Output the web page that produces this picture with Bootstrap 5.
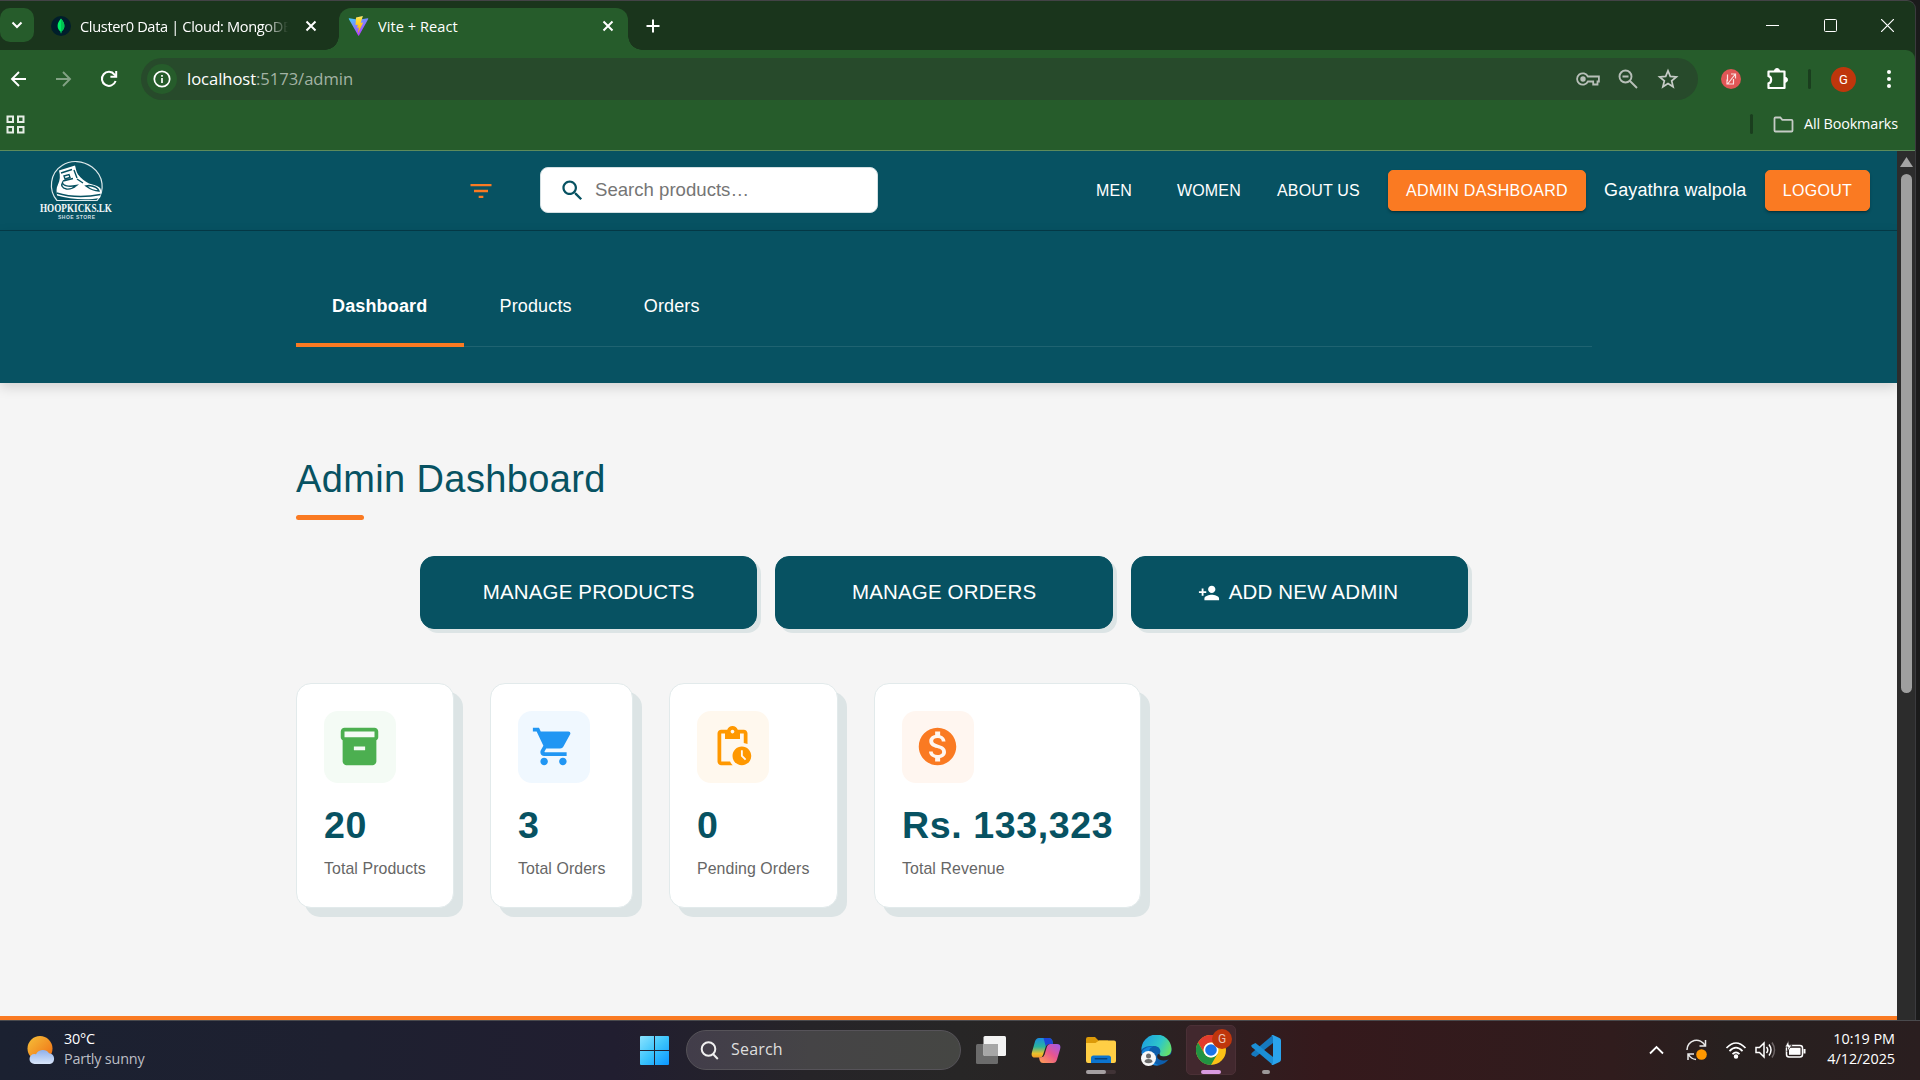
<!DOCTYPE html>
<html lang="en">
<head>
<meta charset="utf-8">
<title>Vite + React</title>
<meta name="viewport" content="width=device-width, initial-scale=1">
<link href="https://cdn.jsdelivr.net/npm/bootstrap@5.3.0/dist/css/bootstrap.min.css" rel="stylesheet">
<style>
:root{--teal:#075262;--brand:#fa7a22;--ui:"Open Sans","Noto Sans",sans-serif;--web:"Liberation Sans",Arial,sans-serif}
body{width:1920px;height:1080px;overflow:hidden;background:#1b1b1b;font-family:var(--ui);line-height:1.2}
svg{display:block;flex:none}
.frame{width:1916px;height:1020px;background:#1a351c;border-top:1px solid #434346;border-right:1px solid #3b3b3e;border-radius:0 9px 0 0;overflow:hidden}
.tabstrip{height:49px;color:#fff;font-size:14.6px;letter-spacing:-.35px}
.tabmenu{width:34px;height:34px;margin-top:7px;border-radius:10px;background:#265c2b}
.tab-idle{width:288px;height:49px;padding:0 4px 0 17px}
.tab-name{white-space:nowrap;overflow:hidden;line-height:24px}
.tab-idle .tab-name{width:210px;margin-left:9px;-webkit-mask-image:linear-gradient(90deg,#000 185px,transparent 208px);mask-image:linear-gradient(90deg,#000 185px,transparent 208px)}
.tab-live{width:289px;height:42px;margin:7px 0 0 17px;background:#265c2b;border-radius:12px 12px 0 0;position:relative;padding:0 12px 7px 9px}
.tab-live::before,.tab-live::after{content:"";position:absolute;bottom:0;width:14px;height:14px}
.tab-live::before{left:-14px;background:radial-gradient(circle at 0 0,transparent 13.5px,#265c2b 14px)}
.tab-live::after{right:-14px;background:radial-gradient(circle at 100% 0,transparent 13.5px,#265c2b 14px)}
.tab-live .tab-name{margin-left:9px;width:223px;letter-spacing:.05px}
.wincontrols{margin-right:21px;gap:44.5px}
.toolbar{height:50px;background:#265c2b;border-radius:0 9px 0 0;padding-top:8px}
.navicons{width:141px;height:42px;padding-left:9px;gap:25px;padding-top:0}
.omnibox{width:1557px;height:42px;border-radius:21px;background:#274a2b;padding-left:6px;padding-right:19px}
.siteinfo{width:30px;height:30px;border-radius:50%;background:#265c2b}
.url{font-size:16.6px;margin-left:10px;letter-spacing:-.05px;color:#a3b3a4}
.url span{color:#fff}
.avatar{width:25px;height:25px;border-radius:50%;background:#bf360c;color:#fff;font:13px Roboto,sans-serif}
.tick{width:3px;height:20px;border-radius:2px;background:#1a3e1e}
.bookmarks{height:51px;background:#265c2b;border-bottom:1px solid #5d8b5b;color:#fff;font-size:14.4px;letter-spacing:-.15px;padding:0 17px 2px 6px}
.viewport{height:869px}
.site{width:1897px;background:#f5f5f5;font-family:var(--web)}
.scroller{width:18px;background:#2c2c2c;padding-top:6px}
.thumb{width:11px;height:519px;border-radius:6px;background:#9f9f9f;margin-top:7px}
.sitebar{height:80px;background:var(--teal);border-bottom:1px solid #053b48;color:#fff;font-size:16px;padding:0 27px 0 40px}
.filter{margin-left:351px}
.searchbox{width:338px;height:46px;margin-left:45px;margin-bottom:1px;border-radius:8px;border:1px solid #d3dfe2;background:#fff;color:#757575;font-size:18.6px;padding-left:18px}
.sitelink{color:#fff;text-decoration:none;letter-spacing:.15px;white-space:nowrap}
.btn-brand{--bs-btn-color:#fff;--bs-btn-bg:var(--brand);--bs-btn-border-color:var(--brand);height:41px;border-radius:5px;font-size:16px;padding:0;box-shadow:0 3px 1px -2px rgba(0,0,0,.2),0 2px 3px rgba(0,0,0,.22);line-height:39px;letter-spacing:.3px}
.username{width:161px;margin-left:18px;font-size:18px;letter-spacing:.15px}
.subnav{height:152px;background:var(--teal);box-shadow:0 4px 12px rgba(0,0,0,.15);padding:36px 0 0 296px}
.tabsrow{width:1296px;height:80px;border-bottom:1px solid #1f6371}
.tabsrow .nav-link{font-size:18px;color:#fff;padding:27px 36px 0;height:80px;letter-spacing:.15px;line-height:24px;border-radius:0}
.tabsrow .nav-link.active{width:167.500px;font-weight:700;border-bottom:4px solid var(--brand)}
.board{padding:73px 0 0 296px;height:633px}
.board h1{font-size:38px;line-height:46px;letter-spacing:.38px;color:var(--teal);font-weight:400}
.rule{width:68px;height:5px;border-radius:3px;background:var(--brand)}
.actions{margin:36px 0 0 124px;gap:18px}
.btn-action{--bs-btn-color:#fff;--bs-btn-bg:var(--teal);--bs-btn-border-color:var(--teal);width:337.4px;height:73px;border-radius:14px;box-shadow:4px 4px 0 #dce4e5;font-size:20.5px;letter-spacing:.16px;padding:0}
.stats{gap:36px;margin-top:54px}
.stat{height:225px;border:1px solid #e2eaeb;border-radius:15px;background:#fff;box-shadow:9px 9px 0 #dce4e5;padding:27px;white-space:nowrap}
.tile{width:72px;height:72px;border-radius:14px;padding:0 1px 2px 0}
.figure-no{font-size:37.6px;line-height:44px;font-weight:700;color:var(--teal);margin-top:20px;letter-spacing:.6px}
.caption-txt{font-size:15.9px;line-height:20px;color:#666;margin-top:12px;letter-spacing:.08px}
.footline{height:4px;background:var(--brand)}
.taskbar{height:60px;border-top:1px solid #4a4a4d;background:linear-gradient(90deg,#1b2131 0,#1e2030 18%,#211e30 32%,#262428 42%,#272626 50%,#2b2223 60%,#35191c 69%,#301c1d 84%,#27201f 90%,#2a1e1f 100%);color:#fff;font-size:14.4px;letter-spacing:-.2px;padding-bottom:1px}
.weather{width:640px;padding-left:26px;gap:8px;line-height:20px}
.weather-text{margin-top:-2px}
.finder{width:275px;height:40px;border-radius:20px;margin-left:17px;background:linear-gradient(90deg,#423d4a,#454446 45%,#454643);border:1px solid #565359;color:#dedede;font-size:16px;padding-left:13px;gap:12px}
.app{width:50px;height:50px;border-radius:5px;margin-right:5px;position:relative}
.app-on{background:#42282e;border:1px solid #4b3036}
.run{position:absolute;bottom:1px;height:4px;border-radius:2px}
.appbadge{position:absolute;left:25px;top:3px;width:20px;height:20px;border-radius:50%;background:#bf360c;color:#eac3b5;font:12px/20px Roboto,sans-serif;text-align:center}
.tray{margin-left:auto;padding-right:25px}
.clock{width:81px;text-align:right;line-height:20px;margin:-2px 0 0 8px;letter-spacing:-.05px}
</style>
<script src="https://cdn.jsdelivr.net/npm/bootstrap@5.3.0/dist/js/bootstrap.bundle.min.js"></script>
</head>
<body>
<div class="frame">
  <div class="tabstrip d-flex">
    <div class="tabmenu d-flex align-items-center justify-content-center"><svg width="12" height="10" viewBox="0 0 12 10"><path d="M1.500 2.500 6 7l4.500-4.500" fill="none" stroke="#fff" stroke-width="2"/></svg></div>
    <div class="tab-idle d-flex align-items-center">
      <svg width="20" height="20" viewBox="0 0 20 20"><circle cx="10" cy="10" r="10" fill="#001e2b"/><path d="M10 2.500c2.300 2.600 3.400 5 3.400 7.400 0 2.600-1.400 4.400-3 5.600l-.2 1.800h-.5l-.2-1.800c-1.600-1.200-2.900-3-2.900-5.600C6.600 7.500 7.700 5.100 10 2.500z" fill="#00ed64"/><path d="M10 3v14.300h.2l.2-1.800c1.600-1.200 3-3 3-5.600C13.400 7.500 12.300 5 10 3z" fill="#00c553"/></svg>
      <div class="tab-name">Cluster0 Data | Cloud: MongoDB</div>
      <svg class="ms-auto" width="14" height="14" viewBox="0 0 14 14" stroke="#fff" stroke-width="2"><path d="M2.500 2.500l9 9m0-9-9 9"/></svg>
    </div>
    <div class="tab-live d-flex align-items-center">
      <svg width="21" height="20" viewBox="0 0 32 32"><defs><linearGradient id="vb" x1="0" y1="0" x2=".6" y2="1"><stop stop-color="#41d1ff"/><stop offset="1" stop-color="#bd34fe"/></linearGradient><linearGradient id="vy" x1="0" y1="0" x2="0" y2="1"><stop stop-color="#ffea83"/><stop offset=".2" stop-color="#ffdd35"/><stop offset="1" stop-color="#ffa800"/></linearGradient></defs><path d="M31.600 4.700 16.900 31c-.3.600-1.100.6-1.400 0L.5 4.700c-.4-.6.200-1.300.9-1.200L16.100 6l14.500-2.500c.7-.1 1.300.6 1 1.200z" fill="url(#vb)"/><path d="M23 0 12 2.200l-.7 11.900c0 .3.300.5.5.4l3.100-.7-1.100 5.400 2.900-.7-1.900 9.700 8.300-17c.1-.3-.1-.6-.4-.6l-3.200.6L23 0z" fill="url(#vy)"/></svg>
      <div class="tab-name">Vite + React</div>
      <svg width="14" height="14" viewBox="0 0 14 14" stroke="#fff" stroke-width="2"><path d="M2.500 2.500l9 9m0-9-9 9"/></svg>
    </div>
    <svg class="align-self-center ms-3" width="18" height="18" viewBox="0 0 18 18" stroke="#fff" stroke-width="2"><path d="M9 2.500v13M2.500 9h13"/></svg>
    <div class="wincontrols d-flex align-items-center ms-auto">
      <svg width="13" height="13"><path d="M0 6.500h13" stroke="#fff"/></svg>
      <svg width="13" height="13"><rect x=".5" y=".5" width="12" height="12" rx="1" fill="none" stroke="#fff"/></svg>
      <svg width="13" height="13"><path d="M0 0l13 13m0-13L0 13" stroke="#fff" stroke-width="1.200"/></svg>
    </div>
  </div>
  <div class="toolbar d-flex">
    <div class="navicons d-flex align-items-center">
      <svg width="20" height="20" viewBox="0 0 20 20" fill="none" stroke="#fff" stroke-width="1.900"><path d="M17 10H3m7-7-7 7 7 7"/></svg>
      <svg width="20" height="20" viewBox="0 0 20 20" fill="none" stroke="#83a285" stroke-width="1.900"><path d="M2 10h14M9 3l7 7-7 7"/></svg>
      <svg width="20" height="20" viewBox="0 0 20 20" fill="none" stroke="#fff" stroke-width="2"><path d="M16.600 12A7 7 0 1 1 15.500 5.600L17 7"/><path d="M17.200 2v5.800h-5.800"/></svg>
    </div>
    <div class="omnibox d-flex align-items-center">
      <div class="siteinfo d-flex align-items-center justify-content-center"><svg width="18" height="18" viewBox="0 0 18 18" fill="none" stroke="#fff" stroke-width="1.700"><circle cx="9" cy="9" r="7.700"/><path d="M9 8v5M9 5v1.800"/></svg></div>
      <div class="url"><span>localhost</span>:5173/admin</div>
      <svg class="ms-auto" width="24" height="20" viewBox="0 0 24 20" fill="none" stroke="#b7bfb8" stroke-width="1.800"><path d="M11.900 7.500a5.700 5.700 0 1 0 0 5h5.300v3h4.300v-3h1.400v-5z"/><circle cx="7" cy="10" r="1.800" fill="#b7bfb8"/></svg>
      <svg class="ms-3" width="24" height="24" viewBox="0 0 24 24" fill="none" stroke="#b7bfb8" stroke-width="1.900"><circle cx="9.500" cy="9.500" r="6"/><path d="M14 14l7 7M6.500 9.500h6"/></svg>
      <svg style="margin-left:17px" width="22" height="22" viewBox="0 0 24 24" fill="none" stroke="#c5cbc6" stroke-width="1.900"><path d="M12 3l2.500 6.200 6.600.5-5.100 4.300 1.600 6.500-5.600-3.500-5.600 3.500L8 14 2.900 9.700l6.600-.5z"/></svg>
    </div>
    <div class="d-flex align-items-center" style="height:42px">
      <svg style="margin-left:23px" width="20" height="20" viewBox="0 0 20 20"><circle cx="10" cy="10" r="10" fill="#e05656"/><path d="M6.500 5.500V12M8.500 15H13M7 14.500l7-9M10 5h4.500v4.500M6 10.500v4.500h3.500M12.500 10v4.500" fill="none" stroke="#fbe0e0" stroke-width="1.200"/></svg>
      <svg style="margin-left:24px" width="24" height="24" viewBox="0 0 24 24"><path d="M3.500 4.500H19.500v16.500H3.500v-4.700c3.500-.5 3.500-6.600 0-7.100z" fill="none" stroke="#fff" stroke-width="2.200" stroke-linejoin="round"/><path d="M9.500 4a2.500 2.500 0 0 1 5 0zM20 10.300a2.500 2.500 0 0 1 0 5z" fill="#fff" stroke="#fff"/></svg>
      <div class="tick" style="margin-left:19px"></div>
      <div class="avatar d-flex align-items-center justify-content-center" style="margin-left:20px">G</div>
      <svg style="margin-left:28px" width="10" height="20" fill="#fff"><circle cx="5" cy="3" r="2"/><circle cx="5" cy="10" r="2"/><circle cx="5" cy="17" r="2"/></svg>
    </div>
  </div>
  <div class="bookmarks d-flex align-items-center">
    <svg width="19" height="19" fill="none" stroke="#e6ede6" stroke-width="2"><path d="M1.500 1.500h5.500v5.500h-5.500zM12 1.500h5.500v5.500H12zM1.500 12h5.500v5.500h-5.500zM12 12h5.500v5.500H12z"/></svg>
    <div class="tick ms-auto"></div>
    <svg style="margin:0 10px 0 20px" width="21" height="17" fill="none" stroke="#c5cbc6" stroke-width="1.800"><path d="M1.500 2.500q0-1 1-1h4.800l2 2.400H18.500q1 0 1 1v9.600q0 1-1 1h-16q-1 0-1-1z"/></svg>
    <div>All Bookmarks</div>
  </div>
  <div class="viewport d-flex">
    <div class="site">
      <nav class="sitebar d-flex align-items-center">
        <svg width="76" height="64" viewBox="0 0 76 64" overflow="visible">
          <path d="M17 41.500C8 31 10 14 22 6.500c9-6 21-5 30 1.500 12 9 13 24 5 33.500z" fill="none" stroke="#dce8ea" stroke-width="1.200"/>
          <path d="M19 11.500 35 6.500c1 3 1 6 3 9 3 4 7 7 11 9 5 1.500 9 2 11.500 5 1 2 .5 6-.5 9.500-14 2.500-31 1-43-2.500-.5-4-1-7 1-11 2-4 2.500-9 1-14z" fill="#fff"/>
          <path d="M21 14l11-3.500M24 17l5-1.500 1 3-5 1.500zM23 22l10-2.500M34 11l3 8M16.500 34c13 4 29 4.500 44 1.500M26.500 30c-5-1-5.500-4-4-6.500.5 3.500 6 4.500 14 3-3 2.500-6.500 4-10 3.500zM46 27c4 3 8 5 13 5-1-3-6-5-10-5.500zM37 20l6 4" fill="none" stroke="#075262" stroke-width="1.400"/>
          <text x="0" y="52.500" textLength="72" lengthAdjust="spacingAndGlyphs" font-family="Liberation Serif,serif" font-size="13" font-weight="700" fill="#f2f7f8">HOOPKICKS.LK</text>
          <text x="18" y="60" textLength="37" font-family="Liberation Sans,sans-serif" font-size="5" font-weight="700" fill="#cfdee1">SHOE STORE</text>
        </svg>
        <svg class="filter" width="28" height="28" viewBox="0 0 24 24" fill="#fa7a22"><path d="M10 18h4v-2h-4v2zM3 6v2h18V6H3zm3 7h12v-2H6v2z"/></svg>
        <div class="searchbox d-flex align-items-center"><svg width="27" height="27" viewBox="0 0 24 24" fill="#075262"><path d="M15.500 14h-.79l-.28-.27C15.410 12.590 16 11.110 16 9.500 16 5.910 13.090 3 9.500 3S3 5.910 3 9.500 5.910 16 9.500 16c1.610 0 3.090-.59 4.230-1.570l.27.28v.79l5 4.990L20.490 19l-4.990-5zm-6 0C7.010 14 5 11.990 5 9.500S7.010 5 9.500 5 14 7.010 14 9.500 11.990 14 9.500 14z"/></svg><span style="margin-left:9px">Search products…</span></div>
        <div class="d-flex align-items-center ms-auto">
          <a class="sitelink" style="width:81px">MEN</a><a class="sitelink" style="width:100px">WOMEN</a><a class="sitelink" style="width:111px">ABOUT US</a>
          <a class="btn btn-brand" style="width:198px">ADMIN DASHBOARD</a>
          <span class="username text-nowrap">Gayathra walpola</span>
          <a class="btn btn-brand" style="width:105px">LOGOUT</a>
        </div>
      </nav>
      <div class="subnav"><div class="tabsrow nav flex-nowrap"><a class="nav-link active">Dashboard</a><a class="nav-link">Products</a><a class="nav-link">Orders</a></div></div>
      <main class="board">
        <h1 class="mb-0">Admin Dashboard</h1>
        <div class="rule" style="margin-top:13px"></div>
        <div class="actions d-flex">
          <a class="btn btn-action d-flex align-items-center justify-content-center">MANAGE PRODUCTS</a>
          <a class="btn btn-action d-flex align-items-center justify-content-center">MANAGE ORDERS</a>
          <a class="btn btn-action d-flex align-items-center justify-content-center"><svg style="margin:0 9px 0 -3px" width="22" height="22" viewBox="0 0 24 24" fill="#fff"><path d="M15 12c2.210 0 4-1.790 4-4s-1.790-4-4-4-4 1.790-4 4 1.790 4 4 4zm-9-2V7H4v3H1v2h3v3h2v-3h3v-2H6zm9 4c-2.670 0-8 1.340-8 4v2h16v-2c0-2.660-5.330-4-8-4z"/></svg>ADD NEW ADMIN</a>
        </div>
        <div class="stats d-flex">
          <div class="stat" style="width:158px">
            <div class="tile d-flex align-items-center justify-content-center" style="background:#f4fbf5"><svg width="45" height="45" viewBox="0 0 24 24" fill="#4caf50"><path d="M20 2H4c-1 0-2 .9-2 2v3.010c0 .72.430 1.340 1 1.690V20c0 1.100 1.100 2 2 2h14c.9 0 2-.9 2-2V8.700c.57-.35 1-.97 1-1.690V4c0-1.100-1-2-2-2zm-5 12H9v-2h6v2zm5-7H4V4h16v3z"/></svg></div>
            <div class="figure-no">20</div><div class="caption-txt">Total Products</div>
          </div>
          <div class="stat" style="width:143px">
            <div class="tile d-flex align-items-center justify-content-center" style="background:#f0f8ff"><svg width="45" height="45" viewBox="0 0 24 24" fill="#2196f3"><path d="M7 18c-1.100 0-1.990.9-1.990 2S5.900 22 7 22s2-.9 2-2-.9-2-2-2zM1 2v2h2l3.600 7.590-1.350 2.450c-.16.280-.25.610-.25.960 0 1.100.9 2 2 2h12v-2H7.420c-.14 0-.25-.11-.25-.25l.03-.12.900-1.630h7.450c.75 0 1.410-.41 1.750-1.030l3.580-6.490c.08-.14.120-.31.120-.48 0-.55-.45-1-1-1H5.210l-.94-2H1zm16 16c-1.100 0-1.990.9-1.990 2s.89 2 1.990 2 2-.9 2-2-.9-2-2-2z"/></svg></div>
            <div class="figure-no">3</div><div class="caption-txt">Total Orders</div>
          </div>
          <div class="stat" style="width:169px">
            <div class="tile d-flex align-items-center justify-content-center" style="background:#fff8ee"><svg width="45" height="45" viewBox="0 0 24 24" fill="#ff9800"><path d="M17 12c-2.760 0-5 2.240-5 5s2.240 5 5 5 5-2.240 5-5-2.240-5-5-5zm1.650 7.350L16.500 17.200V14h1v2.790l1.850 1.850-.7.710zM18 3h-3.180C14.400 1.840 13.300 1 12 1s-2.400.84-2.820 2H6c-1.100 0-2 .9-2 2v15c0 1.100.9 2 2 2h6.110c-.59-.57-1.070-1.250-1.420-2H6V5h2v3h8V5h2v5.080c.71.100 1.380.31 2 .60V5c0-1.100-.9-2-2-2zm-6 2c-.55 0-1-.45-1-1s.45-1 1-1 1 .45 1 1-.45 1-1 1z"/></svg></div>
            <div class="figure-no">0</div><div class="caption-txt">Pending Orders</div>
          </div>
          <div class="stat" style="width:267px">
            <div class="tile d-flex align-items-center justify-content-center" style="background:#fff6f0"><svg width="45" height="45" viewBox="0 0 24 24" fill="#fa7a22"><path d="M12 2C6.480 2 2 6.480 2 12s4.480 10 10 10 10-4.480 10-10S17.520 2 12 2zm1.410 16.090V20h-2.670v-1.930c-1.710-.36-3.160-1.460-3.270-3.400h1.960c.1 1.050.820 1.870 2.650 1.870 1.960 0 2.400-.98 2.400-1.590 0-.83-.44-1.610-2.670-2.140-2.480-.6-4.180-1.620-4.180-3.670 0-1.720 1.390-2.840 3.110-3.210V4h2.670v1.950c1.860.45 2.790 1.860 2.850 3.390H14.300c-.05-1.110-.64-1.870-2.220-1.870-1.500 0-2.400.68-2.400 1.640 0 .84.650 1.390 2.670 1.910s4.180 1.390 4.180 3.910c-.01 1.830-1.380 2.830-3.120 3.160z"/></svg></div>
            <div class="figure-no">Rs. 133,323</div><div class="caption-txt">Total Revenue</div>
          </div>
        </div>
      </main>
      <div class="footline"></div>
    </div>
    <div class="scroller d-flex flex-column align-items-center"><svg width="13" height="10"><path d="M6.500 0 13 10H0z" fill="#a3a3a3"/></svg><div class="thumb"></div></div>
  </div>
</div>
<footer class="taskbar d-flex align-items-center">
  <div class="weather d-flex align-items-center">
    <svg width="30" height="30" viewBox="0 0 30 30"><defs><linearGradient id="sun" x1="0" y1="0" x2="1" y2="1"><stop stop-color="#f5c13a"/><stop offset="1" stop-color="#f06a12"/></linearGradient><linearGradient id="cl" x1="0" y1="0" x2="0" y2="1"><stop stop-color="#8fb0ea"/><stop offset="1" stop-color="#d9e6fa"/></linearGradient></defs><circle cx="14" cy="13.500" r="12.500" fill="url(#sun)"/><path d="M8.500 29a5 5 0 0 1 0-10q1-.1 1.500.2a7.500 7.500 0 0 1 13-1 5.500 5.500 0 0 1 1 10.800z" fill="url(#cl)"/></svg>
    <div class="weather-text"><div>30°C</div><div style="color:#bcbec5">Partly sunny</div></div>
  </div>
  <svg width="29" height="29" viewBox="0 0 29 29"><defs><linearGradient id="wn" x1="0" y1="0" x2="1" y2="1"><stop stop-color="#8be3ff"/><stop offset=".5" stop-color="#3cc4fb"/><stop offset="1" stop-color="#0a95ff"/></linearGradient></defs><path d="M1 0h13v14H0V1q0-1 1-1zM15 0h13q1 0 1 1v13H15zM0 15h14v14H1q-1 0-1-1zM15 15h14v13q0 1-1 1H15z" fill="url(#wn)"/></svg>
  <div class="finder d-flex align-items-center"><svg width="19" height="19" fill="none" stroke="#f0f0f0" stroke-width="2"><circle cx="8.500" cy="8" r="6.800"/><path d="M13 13l4.800 5"/></svg><span style="letter-spacing:.2px">Search</span></div>
  <div class="app d-flex align-items-center justify-content-center" style="margin-left:5px"><svg width="30" height="28" viewBox="0 0 30 28"><rect y="8" width="22" height="20" rx="1.500" fill="#6b6b6b"/><rect x="7.500" width="22.500" height="20" rx="1.500" fill="#f3f3f3"/><path d="M7.500 8H22v12H9q-1.500 0-1.500-1.500z" fill="#a6a6a6"/></svg></div>
  <div class="app d-flex align-items-center justify-content-center"><svg width="30" height="27" viewBox="0 0 30 27"><defs><linearGradient id="c1" x1="0" y1="0" x2="0" y2="1"><stop stop-color="#1a8be0"/><stop offset=".45" stop-color="#2bb59c"/><stop offset=".8" stop-color="#ecc12c"/><stop offset="1" stop-color="#f39a26"/></linearGradient><linearGradient id="c2" x1="1" y1="0" x2=".1" y2="1"><stop stop-color="#9b5af0"/><stop offset=".5" stop-color="#e8558f"/><stop offset="1" stop-color="#ff9c55"/></linearGradient></defs><path d="M8 1h10q2.500 0 3.300 2.500L22 7h-4.500q-2 0-2.700 2.500L12 18q-.8 2.500-3 2.500H4Q-.5 20.500 1 15L4 4.500Q5 1 8 1z" fill="url(#c1)"/><path d="M12.500 1H18q2.500 0 3.300 2.500L22.200 7h-4.700q-2 0-2.700 2.500z" fill="#1d45d8"/><path d="M22 26H12q-2.500 0-3.300-2.500L8 20.300h2q2.700 0 3.500-2.600L16 9.500q.8-2.500 3-2.500h7q4.500 0 3 5.500L26 22.500Q25 26 22 26z" fill="url(#c2)"/></svg></div>
  <div class="app d-flex align-items-center justify-content-center"><svg width="30" height="27" viewBox="0 0 30 27"><path d="M0 2q0-2 2-2h7l3.500 3.500H22v8H0z" fill="#dc9a08"/><path d="M0 6h9.500L13 3.500h15q2 0 2 2V24q0 2-2 2H2q-2 0-2-2z" fill="#ffce45"/><path d="M5 26v-5q0-2.500 2.500-2.500h15Q25 18.500 25 21v5z" fill="#0c74cf"/><rect x="8.500" y="21" width="13" height="1.600" rx=".8" fill="#07427c"/></svg><span class="run" style="left:10px;width:30px;background:#403336"></span><span class="run" style="left:10px;width:20px;background:#a5a0a2"></span></div>
  <div class="app d-flex align-items-center justify-content-center"><svg width="31" height="31" viewBox="0 0 31 31"><defs><linearGradient id="e1" x1="0" y1=".2" x2="1" y2=".6"><stop stop-color="#1c9de0"/><stop offset=".6" stop-color="#2ec7c9"/><stop offset="1" stop-color="#66e06a"/></linearGradient></defs><circle cx="15.500" cy="15.500" r="15" fill="#0d5eac"/><path d="M.5 15A15 15 0 0 1 30.500 14c0 5-3.500 7.500-8 7.500-3 0-5-1.500-3.800-3C20.500 15.500 18.500 11 13 11 7.500 10.500 2 12 .5 15z" fill="url(#e1)"/><path d="M13.500 11.500c-5 0-7 5-4 11 2 5 7 8 10 7.500-8 2-17-3-19-12 1-4 6-7 13-6.500z" fill="#1583d8"/><path d="M18.700 18.500c-.8 1.700 1 3 3.800 3 4 0 7-1.500 9-4.500v6c-5 3-13 3.500-15 0-.8-2 0-4 2.200-4.500z" fill="#2a2123"/><circle cx="7.500" cy="23.500" r="7.500" fill="#f7f7f7"/><circle cx="7.500" cy="21" r="2.500" fill="#6b6b6b"/><path d="M3.500 27q0-3 4-3t4 3q-4 2.500-8 0z" fill="#6b6b6b"/></svg></div>
  <div class="app app-on d-flex align-items-center justify-content-center"><svg width="30" height="30" viewBox="0 0 30 30"><circle cx="15" cy="15" r="15" fill="#fbc116"/><path d="M2 7.500A15 15 0 0 1 28 7.500H15a7.500 7.500 0 0 0-6.500 11z" fill="#e33b2e"/><path d="M2 7.500 8.500 18.800Q11 22.500 15 22.500q3.500 0 6.500-3.700L15 30A15 15 0 0 1 2 7.500z" fill="#229342"/><circle cx="15" cy="15" r="7.500" fill="#fff"/><circle cx="15" cy="15" r="5.800" fill="#1a73e8"/></svg><span class="appbadge">G</span><span class="run" style="left:14px;width:20px;background:#d99be0;bottom:0"></span></div>
  <div class="app d-flex align-items-center justify-content-center" style="margin-left:0"><svg width="30" height="30" viewBox="0 0 30 30"><path d="M22 0v8L4.500 22 1 20.300q-1.500-1 0-2.500z" fill="#1679bf"/><path d="M22 30v-8L4.500 8 1 9.700q-1.500 1 0 2.500z" fill="#1b8fd6"/><path d="M22 0l6.500 3Q30 3.800 30 5.500v19q0 1.700-1.500 2.500L22 30q-1 .3-2-.7 2 .5 2-2V2.700q0-2.500-2-2 1-1 2-.7z" fill="#2aa3ec"/></svg><span class="run" style="left:21px;width:8px;background:#9d9899"></span></div>
  <div class="tray d-flex align-items-center">
    <svg width="15" height="10" fill="none" stroke="#fff" stroke-width="1.800"><path d="M1 8.500l6.500-6.500L14 8.500"/></svg>
    <svg style="margin-left:22px" width="22" height="22" viewBox="0 0 22 22" fill="none" stroke="#e9e9e9" stroke-width="1.500"><path d="M1 11a9.500 9.500 0 0 1 18-4.500M19.500 1v6h-6M10 20.500Q5 20 2.500 15.500M2 21v-6h6"/><circle cx="15.500" cy="15.500" r="5.300" fill="#ff9800" stroke="none"/></svg>
    <svg style="margin-left:17px" width="22" height="18" viewBox="0 0 22 18" fill="none" stroke="#fff" stroke-width="1.700"><path d="M1.500 7q9.500-10 19 0M4.500 10.200q6.500-7 13 0M7.500 13.200q3.500-3.700 7 0"/><circle cx="11" cy="15.500" r="1.400" fill="#fff"/></svg>
    <svg style="margin-left:8px" width="21" height="18" viewBox="0 0 21 18" fill="none" stroke="#fff" stroke-width="1.500"><path d="M1 6.500h3.500L9 2v14l-4.500-4.500H1z"/><path d="M11.500 6q2.500 3 0 6M14 3.500q4 5.500 0 11"/><path d="M17 1.500q5 7.500 0 15" stroke="#6e6667"/></svg>
    <svg style="margin-left:9px" width="21" height="18" viewBox="0 0 21 18" overflow="visible"><rect x="1.500" y="4.500" width="16" height="11.500" rx="2.500" fill="none" stroke="#fff" stroke-width="1.500"/><rect x="4" y="6.800" width="11.500" height="7" fill="#fff"/><path d="M18.500 8h2v4.500h-2z" fill="#fff"/><path d="M3.500-.5 0 6h3l-1 5 5-7H4z" fill="#fff" stroke="#28201f" stroke-width=".7"/></svg>
    <div class="clock"><div>10:19 PM</div><div>4/12/2025</div></div>
  </div>
</footer>
</body>
</html>
